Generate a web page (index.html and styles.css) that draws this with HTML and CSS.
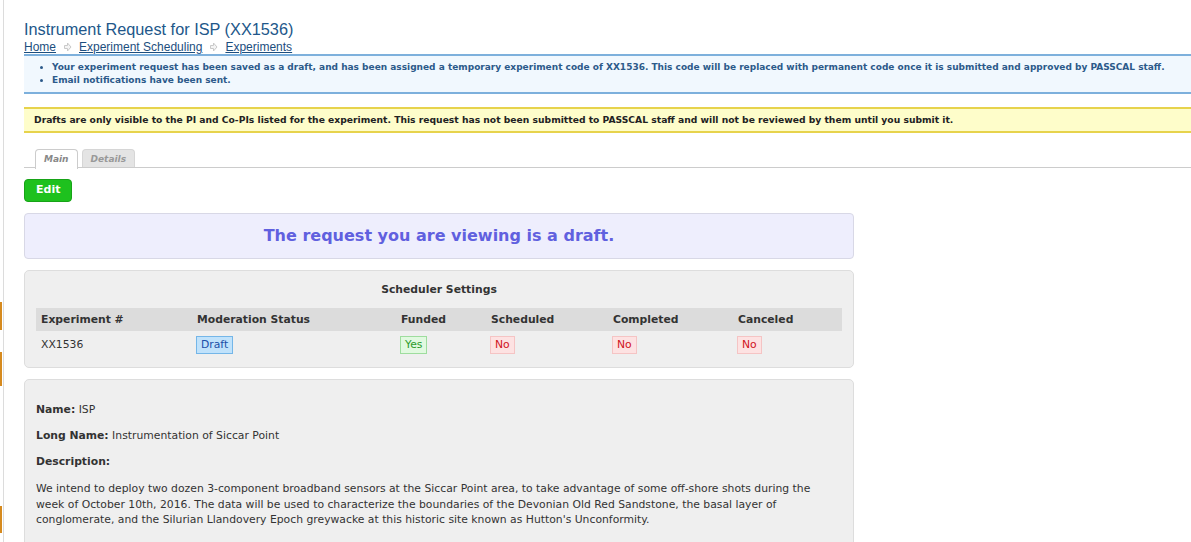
FILE: index.html
```html
<!DOCTYPE html>
<html lang="en">
<head>
    <meta charset="UTF-8">
    <title>Instrument Request for ISP (XX1536)</title>
    <link rel="stylesheet" href="styles.css">
</head>
<body>
    <div class="rail">
        <span class="mark m1"></span>
        <span class="mark m2"></span>
        <span class="mark m3"></span>
    </div>
    <div class="page">
        <h1 class="title">Instrument Request for ISP (XX1536)</h1>
        <div class="crumbs">
            <a href="#">Home</a>
            <svg class="sep" width="9" height="10" viewBox="0 0 9 10"><path d="M1.5 3.5h3v-2.5l3.5 4-3.5 4v-2.5h-3z" fill="#f4f4f4" stroke="#c9c9c9" stroke-width="1"/></svg>
            <a href="#">Experiment Scheduling</a>
            <svg class="sep" width="9" height="10" viewBox="0 0 9 10"><path d="M1.5 3.5h3v-2.5l3.5 4-3.5 4v-2.5h-3z" fill="#f4f4f4" stroke="#c9c9c9" stroke-width="1"/></svg>
            <a href="#">Experiments</a>
        </div>

        <div class="messages">
            <ul>
                <li>Your experiment request has been saved as a draft, and has been assigned a temporary experiment code of XX1536. This code will be replaced with permanent code once it is submitted and approved by PASSCAL staff.</li>
                <li>Email notifications have been sent.</li>
            </ul>
        </div>

        <div class="warning">Drafts are only visible to the PI and Co-PIs listed for the experiment. This request has not been submitted to PASSCAL staff and will not be reviewed by them until you submit it.</div>

        <div class="tabs">
            <span class="tab active">Main</span>
            <span class="tab">Details</span>
        </div>

        <a href="#" class="btn-edit">Edit</a>

        <div class="draft-note">The request you are viewing is a draft.</div>

        <div class="panel scheduler">
            <h3>Scheduler Settings</h3>
            <table>
                <thead>
                    <tr>
                        <th class="c1">Experiment #</th>
                        <th class="c2">Moderation Status</th>
                        <th class="c3">Funded</th>
                        <th class="c4">Scheduled</th>
                        <th class="c5">Completed</th>
                        <th class="c6">Canceled</th>
                    </tr>
                </thead>
                <tbody>
                    <tr>
                        <td>XX1536</td>
                        <td><span class="badge blue">Draft</span></td>
                        <td><span class="badge green">Yes</span></td>
                        <td><span class="badge red">No</span></td>
                        <td><span class="badge red">No</span></td>
                        <td><span class="badge red">No</span></td>
                    </tr>
                </tbody>
            </table>
        </div>

        <div class="panel info">
            <p><strong>Name:</strong> ISP</p>
            <p><strong>Long Name:</strong> Instrumentation of Siccar Point</p>
            <p><strong>Description:</strong></p>
            <p class="desc">We intend to deploy two dozen 3-component broadband sensors at the Siccar Point area, to take advantage of some off-shore shots during the week of October 10th, 2016. The data will be used to characterize the boundaries of the Devonian Old Red Sandstone, the basal layer of conglomerate, and the Silurian Llandovery Epoch greywacke at this historic site known as Hutton's Unconformity.</p>
        </div>
    </div>
</body>
</html>
```

FILE: styles.css
```css
* {
    box-sizing: border-box;
}
body {
    margin: 0;
    display: flex;
    font-family: Verdana, 'DejaVu Sans', sans-serif;
    font-size: 10.8px;
    color: #333;
    background-color: #ffffff;
    overflow: hidden;
    height: 542px;
}
.rail {
    width: 3px;
    flex: none;
    display: flex;
    flex-direction: column;
}
.mark {
    display: block;
    width: 2px;
    background-color: #d68a1e;
}
.m1 {
    margin-top: 302px;
    height: 28px;
}
.m2 {
    margin-top: 22px;
    height: 34px;
}
.m3 {
    margin-top: 120px;
    height: 27px;
}
.page {
    flex: none;
    width: 1210px;
    border-left: 1px solid #dcdcdc;
    padding: 18px 0 0 20px;
}
.title {
    font-family: 'Liberation Sans', Arial, sans-serif;
    font-weight: normal;
    font-size: 16.3px;
    color: #22578a;
    margin: 0;
    line-height: 22px;
}
.crumbs {
    font-family: 'Liberation Sans', Arial, sans-serif;
    font-size: 12px;
    line-height: 14px;
    display: flex;
    align-items: center;
    gap: 7px;
}
.crumbs a {
    color: #1c4e7e;
}
.messages {
    background-color: #f1f8fe;
    border-top: 2px solid #7db0dc;
    border-bottom: 2px solid #7db0dc;
    color: #2c5a8a;
    font-weight: bold;
    font-size: 9px;
    padding: 5px 0 5px 0;
    white-space: nowrap;
}
.messages ul {
    margin: 0;
    padding-left: 28px;
    line-height: 13px;
}
.warning {
    margin-top: 13px;
    background-color: #fefdca;
    border-top: 2px solid #e7d34c;
    border-bottom: 2px solid #e7d34c;
    font-weight: bold;
    font-size: 9.2px;
    color: #222;
    padding: 5px 10px 6px 10px;
    white-space: nowrap;
}
.tabs {
    margin-top: 16px;
    border-bottom: 1px solid #cccccc;
    padding-left: 11px;
    display: flex;
    gap: 4px;
    height: 19px;
}
.tab {
    font-size: 9px;
    font-weight: bold;
    font-style: italic;
    color: #999;
    background-color: #e4e4e4;
    border: 1px solid #d6d6d6;
    border-bottom: none;
    border-radius: 4px 4px 0 0;
    padding: 4px 8px 0 8px;
}
.tab.active {
    background-color: #ffffff;
    color: #888;
    border-color: #cccccc;
    height: 20px;
    padding: 4px 8px 0 8px;
}
.btn-edit {
    display: inline-block;
    margin-top: 11px;
    background-color: #1ec11e;
    border: 1px solid #17a317;
    border-radius: 4px;
    color: #ffffff;
    font-weight: bold;
    font-size: 11px;
    text-decoration: none;
    padding: 3px 11px 4px 11px;
    line-height: 14px;
}
.draft-note {
    width: 830px;
    margin-top: 11px;
    background-color: #eeeefd;
    border: 1px solid #d8d8e6;
    border-radius: 4px;
    color: #6060df;
    font-weight: bold;
    font-size: 16px;
    text-align: center;
    padding: 12px 0 12px 0;
    line-height: 20px;
}
.panel {
    width: 830px;
    background-color: #efefef;
    border: 1px solid #dddddd;
    border-radius: 5px;
    margin-top: 11px;
}
.scheduler {
    padding: 0 11px 13px 11px;
}
.scheduler h3 {
    margin: 0;
    font-size: 10.8px;
    text-align: center;
    padding: 12px 0 12px 0;
    line-height: 13px;
    color: #333;
}
.scheduler table {
    width: 806px;
    border-collapse: collapse;
}
.scheduler th {
    background-color: #dcdcdc;
    text-align: left;
    padding: 5px 5px 4px 5px;
    line-height: 14px;
    color: #333;
}
.scheduler td {
    padding: 5px 5px 0 5px;
    line-height: 14px;
}
.c1 { width: 156px; }
.c2 { width: 204px; }
.c3 { width: 90px; }
.c4 { width: 122px; }
.c5 { width: 125px; }
.badge {
    display: inline-block;
    padding: 1px 4px;
    border: 1px solid;
    margin-left: -1px;
}
.badge.blue {
    background-color: #c0e2fb;
    border-color: #74b6e8;
    color: #1b4fa8;
}
.badge.green {
    background-color: #e1f9e0;
    border-color: #9edd9e;
    color: #2b9b2b;
}
.badge.red {
    background-color: #fde2e2;
    border-color: #f5c4c4;
    color: #d0121b;
}
.info {
    padding: 23px 11px 20px 11px;
    height: 200px;
}
.info p {
    margin: 0 0 12px 0;
    line-height: 14px;
}
.info .desc {
    line-height: 15.5px;
}
```
